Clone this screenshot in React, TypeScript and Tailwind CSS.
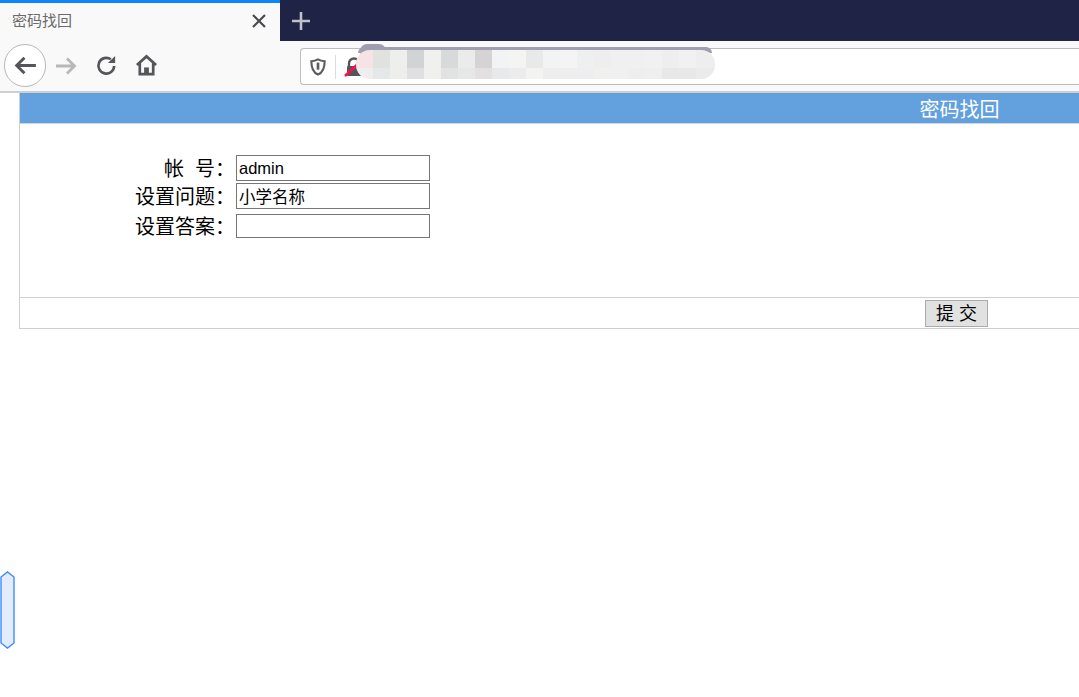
import { ReactNode } from "react";

const cjk = "font-['Liberation_Sans','Noto_Sans_CJK_SC',sans-serif]";

// Mosaic over the address text, two rows of 17px blocks
const mosaicTop = [
  "#f5e3e5", "#e0e2e0", "#eeeeec", "#d2d3d5", "#f0f0ee", "#d8d9db", "#ebebe9",
  "#d5d3d4", "#f1f3f5", "#f4f4f2", "#e8eae9", "#f2f4f4", "#f4f4f4", "#eeefef",
  "#eeeeee", "#f0f0f0", "#f0f0f0", "#f1f1f1", "#eeeeee", "#f1f1f1", "#eeeeee",
];
const mosaicBottom = [
  "#eeeeee", "#e6e7e9", "#eeeeec", "#e0e0e2", "#f0f0ee", "#e2e2e2", "#e6e8e7",
  "#e3e0e1", "#e8e9eb", "#ececec", "#f3f3f2", "#eeeeef", "#eeeeee", "#eeeef0",
  "#f0f0ee", "#f0f0f0", "#eeeeee", "#efefef", "#e8e8e8", "#e8e8e8", "#ebebeb",
];

const ToolbarIcon = ({ children, className }: { children: ReactNode; className?: string }) => (
  <svg viewBox="0 0 24 24" fill="none" strokeWidth="2.8" stroke="currentColor" className={className}>
    {children}
  </svg>
);

const FormRow = ({ label, value, inputClass }: { label: ReactNode; value: string; inputClass: string }) => (
  <div className="flex items-center">
    <div className="h-[24px] w-[215px] whitespace-nowrap text-right text-[20px] leading-[26px] text-black">{label}</div>
    <input
      readOnly
      value={value}
      className={`ml-[1px] w-[194px] border border-[#767676] bg-white px-[2px] text-[16.5px] text-black outline-none ${inputClass}`}
    />
  </div>
);

export default function App() {
  return (
    <div className={`relative h-screen w-full overflow-hidden bg-white ${cjk}`}>
      {/* tab strip */}
      <div className="flex h-[41px] bg-[#1f2345]">
        <div className="flex w-[280px] flex-col bg-[#f9f9fa]">
          <div className="h-[3px] bg-[#0a84ff]" />
          <div className="flex flex-1 items-center justify-between pb-[2px] pl-[12px] pr-[14px]">
            <span className="text-[15px] text-[#6a6a6a]">密码找回</span>
            <svg viewBox="0 0 14 14" className="h-[14px] w-[14px] text-[#4a4a4f]" stroke="currentColor" strokeWidth="2.2" fill="none">
              <path d="M1 1 L13 13 M13 1 L1 13" />
            </svg>
          </div>
        </div>
        <div className="flex w-[42px] items-center justify-center">
          <svg viewBox="0 0 18 18" className="h-[18px] w-[18px] text-[#bfc0cb]" stroke="currentColor" strokeWidth="2.6" fill="none">
            <path d="M9 0 V18 M0 9 H18" />
          </svg>
        </div>
      </div>

      {/* toolbar */}
      <div className="flex h-[52px] items-center border-b-2 border-[#cfcfcf] bg-[#f9f9fa] pb-[1px]">
        <div className="ml-[4px] flex h-[43px] w-[42px] items-center justify-center rounded-full border border-[#b8b8b8] bg-white text-[#55555a]">
          <ToolbarIcon className="h-[25px] w-[25px]">
            <path d="M22 12 H4 M11 4.5 L3.5 12 L11 19.5" />
          </ToolbarIcon>
        </div>
        <div className="ml-[8px] text-[#b8b8ba]">
          <ToolbarIcon className="h-[24px] w-[24px]">
            <path d="M2 12 H20 M13 4.5 L20.5 12 L13 19.5" />
          </ToolbarIcon>
        </div>
        <div className="ml-[17px] text-[#55555a]">
          <ToolbarIcon className="h-[23px] w-[23px]">
            <path d="M20 12.5 A8.2 8.2 0 1 1 16.5 5.5" />
            <path d="M21 2 V9.5 H13.5 Z" fill="currentColor" stroke="none" />
          </ToolbarIcon>
        </div>
        <div className="ml-[17px] text-[#55555a]">
          <ToolbarIcon className="h-[23px] w-[23px]">
            <path d="M2 11.5 L12 2.5 L22 11.5 M5 9.5 V21 H19 V9.5" />
            <path d="M9.5 21 V14 H14.5 V21" fill="currentColor" stroke="none" />
          </ToolbarIcon>
        </div>

        {/* address bar */}
        <div className="relative ml-[142px] mt-[2px] flex h-[37px] flex-1 items-center rounded-l-[4px] border border-r-0 border-[#bcbcbc] bg-white">
          <svg viewBox="0 0 18 20" className="ml-[9px] h-[18px] w-[16px] text-[#5b5b5f]" fill="none" stroke="currentColor" strokeWidth="2.4">
            <path d="M9 1.5 C6.5 3 4 3.4 1.5 3.5 C1.5 11 3 16 9 18.5 C15 16 16.5 11 16.5 3.5 C14 3.4 11.5 3 9 1.5 Z" />
            <path d="M9 5 V13" strokeWidth="3" />
          </svg>
          <div className="ml-[9px] h-[24px] w-px bg-[#dcdcdc]" />
          <svg viewBox="0 0 20 20" className="ml-[8px] h-[20px] w-[20px]">
            <path d="M5 9 V6.5 A5 5 0 0 1 15 6.5 V9" fill="none" stroke="#55555a" strokeWidth="2.4" />
            <rect x="3" y="9" width="14" height="10" rx="1" fill="#55555a" />
            <path d="M1 19 L15 6" stroke="#ff0f4f" strokeWidth="2.6" />
          </svg>
        </div>
      </div>

      {/* form box */}
      <div className="ml-[19px] flex h-[236px] w-[1882px] flex-col border-b border-l border-[#cfcfcf]">
        <div className="flex h-[31px] items-center justify-center border-b border-[#cfd6de] bg-[#62a0de] pt-[3px] text-[20px] text-white">
          <span className="mr-[2px]">密码找回</span>
        </div>
        <div className="flex h-[174px] flex-col border-b border-[#cfcfcf] pt-[31px]">
          <FormRow label="帐&nbsp;&nbsp;号：" value="admin" inputClass="h-[26px]" />
          <div className="mt-[2px]">
            <FormRow label="设置问题：" value="小学名称" inputClass="h-[26px]" />
          </div>
          <div className="mt-[5px]">
            <FormRow label="设置答案：" value="" inputClass="h-[24px]" />
          </div>
        </div>
        <div className="flex flex-1 items-center justify-center">
          <button className="mr-[8px] h-[27px] w-[63px] border border-[#ababab] bg-[#e1e1e1] pt-[2px] text-[18px] leading-none text-black">
            提 交
          </button>
        </div>
      </div>

      {/* redaction mosaic over the address bar */}
      <div className="absolute left-[358px] top-[47px] h-[6px] w-[354px] rounded-t-full bg-[#a09fb0]" />
      <div className="absolute left-[360px] top-[44px] h-[14px] w-[26px] rounded-full bg-[#a09fb0]" />
      <div className="absolute left-[356px] top-[50px] overflow-hidden rounded-[14px]">
        <div className="flex">
          {mosaicTop.map((c, i) => (
            <div key={i} className="h-[18px] w-[17px]" style={{ backgroundColor: c }} />
          ))}
          <div className="h-[18px] w-[2px] bg-[#eeeeee]" />
        </div>
        <div className="flex">
          {mosaicBottom.map((c, i) => (
            <div key={i} className="h-[11px] w-[17px]" style={{ backgroundColor: c }} />
          ))}
          <div className="h-[11px] w-[2px] bg-[#ebebeb]" />
        </div>
      </div>

      {/* side handle */}
      <svg viewBox="0 0 15 78" className="absolute left-0 top-[571px] h-[78px] w-[15px]">
        <path d="M1 6 L7.5 1 L14 6 V72 L7.5 77 L1 72 Z" fill="#e3ecfd" stroke="#3f8cff" strokeWidth="1.4" />
      </svg>
    </div>
  );
}
